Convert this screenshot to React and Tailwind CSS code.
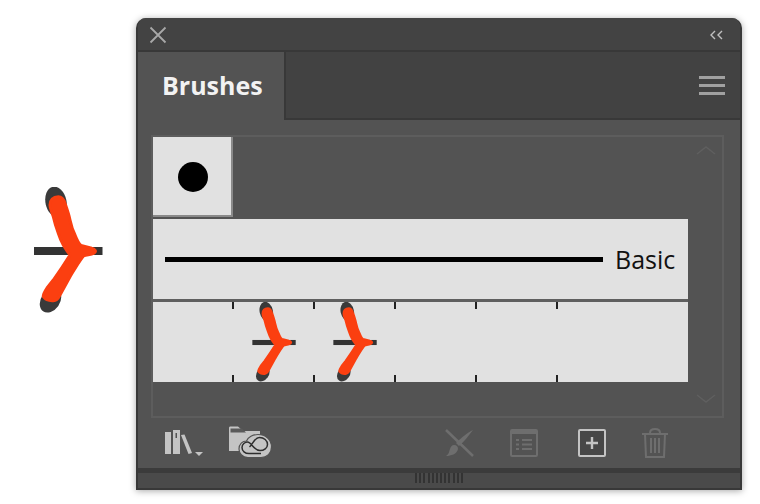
const Brush = ({ className }) => (
  <svg viewBox="0 0 70 128" className={className}>
    <rect x="0" y="60" width="68.5" height="8" fill="#333333" />
    <ellipse cx="22" cy="15" rx="10.500" ry="15.500" transform="rotate(-12 22 15)" fill="#3a3a3a" />
    <ellipse cx="16.500" cy="113.500" rx="9.500" ry="13" transform="rotate(35 16.500 113.500)" fill="#3a3a3a" />
    <path d="M16 18C16 13 19 9.700 24.300 9.700C28 9.700 30 13 31 16.300C33 22 35 28 36 33C37.500 40 39 44 41 48C43 53 45 57 47 58.500L57.700 61.300C61 62 62 64 61 65C60 67 57 67.500 53 68C51 68.200 49.500 69 49.300 69C44 76 40 83 36 89.700L26 108C24 112 22 113.700 19.300 113.700C15 114 11 112 9.300 109.700C9 107 11 104 13 101L19.300 93C25 85 31 76 36 68C33 64 31 61 29.300 58C27 54 25.500 50 24.300 46.300C22 40 20.500 35 19.300 29.700C18 25 16 22 16 18Z" fill="#fb3f10" stroke="#fb3f10" strokeWidth="3" strokeLinejoin="round" />
  </svg>
);

const LibraryIcon = () => (
  <svg width="40" height="26" viewBox="0 0 40 26" className="mr-[24px]">
    <rect x="1" y="2" width="6" height="22" fill="#c4c4c4" />
    <rect x="9" y="0" width="7" height="24" fill="#c4c4c4" />
    <rect x="11.500" y="3" width="1.500" height="5" fill="#535353" />
    <path d="M17 5L20.500 4.500L28 23L24.500 24Z" fill="#c4c4c4" />
    <path d="M31 22h8l-4 4z" fill="#c4c4c4" />
  </svg>
);

const FolderCloudIcon = () => (
  <svg width="45" height="34" viewBox="0 0 45 34">
    <path d="M1 25V2C1 1 1.500 0.500 2.500 0.500H10L15 5H32V25Z" fill="#c4c4c4" />
    <path d="M2.500 6.500H18L14 2.500H2.500Z" fill="#5a5a5a" />
    <path d="M20 31.500C14 31.500 11 27 11 23C11 18 14.500 15 18.500 15C20 11 25 8.500 30 8.500C38 8.500 43.500 14 43.500 21C43.500 27.500 39 31.500 33 31.500Z" fill="#c4c4c4" stroke="#535353" strokeWidth="1.200" />
    <path d="M33 27.500H21C17 27.500 14 25 14 21.500C14 18 17 16 19.500 16C23.500 16 25.500 24.500 32 24.500C36 24.500 39.500 22 39.500 18.500C39.500 14.500 36 11.500 31.500 11.500C26.500 11.500 25 18 21.500 21" fill="none" stroke="#2e2e2e" strokeWidth="1.500" />
  </svg>
);

const NoBrushIcon = () => (
  <svg width="29" height="29" viewBox="0 0 29 29">
    <path d="M1 1L28 27" stroke="#6e6e6e" strokeWidth="2.500" />
    <path d="M28 1C24 6 19 13 14 17L11 14C16 9 23 3 28 1Z" fill="#6e6e6e" />
    <path d="M9 16C12 16 13 18 13 20C12 25 6 27 1 27C4 25 4 23 5 20C5.500 18 7 16 9 16Z" fill="#6e6e6e" />
  </svg>
);

const OptionsIcon = () => (
  <svg width="28" height="28" viewBox="0 0 28 28">
    <rect x="1" y="1" width="26" height="26" rx="1" fill="none" stroke="#6e6e6e" strokeWidth="2" />
    <rect x="1" y="1" width="26" height="4" fill="#6e6e6e" />
    <path d="M6 11h3M12 11h10M6 15.500h3M12 15.500h10M6 20h3M12 20h10" stroke="#6e6e6e" strokeWidth="2" />
  </svg>
);

const NewIcon = () => (
  <svg width="28" height="28" viewBox="0 0 28 28">
    <rect x="1" y="1" width="26" height="26" rx="1" fill="#474747" stroke="#c4c4c4" strokeWidth="2" />
    <path d="M14 8v12M8 14h12" stroke="#c4c4c4" strokeWidth="2.400" />
  </svg>
);

const TrashIcon = () => (
  <svg width="26" height="30" viewBox="0 0 26 30">
    <path d="M0 6h26" stroke="#6e6e6e" strokeWidth="2" />
    <path d="M8 5C8 2 10 1 13 1C16 1 18 2 18 5" fill="none" stroke="#6e6e6e" strokeWidth="2" />
    <path d="M3 6L4 29H22L23 6" fill="none" stroke="#6e6e6e" strokeWidth="2" />
    <path d="M9 10v15M13 10v15M17 10v15" stroke="#6e6e6e" strokeWidth="2" />
  </svg>
);

const Ticks = ({ children }) => (
  <div className="relative flex h-full w-[81px] flex-col items-end justify-between">
    <div className="h-[7px] w-[2px] bg-[#222222]" />
    {children}
    <div className="h-[7px] w-[2px] bg-[#222222]" />
  </div>
);

export default function App() {
  return (
    <div className="flex h-[504px] w-[760px] items-start overflow-hidden bg-white pl-[34px] pt-[18px] font-['Open_Sans',sans-serif]">
      <Brush className="mt-[169px] h-[128px] w-[70px] shrink-0" />
      <div className="ml-[32px] flex h-[472px] w-[606px] shrink-0 flex-col overflow-hidden rounded-t-[10px] border-2 border-t-0 border-[#383838] bg-[#535353] shadow-[0_1px_7px_rgba(0,0,0,0.35)]">
        <div className="flex h-[34px] shrink-0 items-center justify-between border-b-2 border-[#383838] bg-[#434343] pl-[11px] pr-[17px] pt-[2px]">
          <svg width="18" height="18" viewBox="0 0 18 18">
            <path d="M1.500 1.500L16.500 16.500M16.500 1.500L1.500 16.500" stroke="#a8a8a8" strokeWidth="1.800" />
          </svg>
          <svg width="14" height="10" viewBox="0 0 14 10">
            <path d="M6 1L2 5L6 9M13 1L9 5L13 9" fill="none" stroke="#c0c0c0" strokeWidth="1.400" />
          </svg>
        </div>
        <div className="flex h-[68px] shrink-0 bg-[#424242]">
          <div className="flex h-full w-[148px] items-center border-r-2 border-[#383838] bg-[#535353] pb-[2px] pl-[24px] text-[25px] font-bold leading-none text-[#f2f2f2]">
            Brushes
          </div>
          <div className="flex flex-1 items-center justify-end border-b-2 border-[#383838] pr-[15px]">
            <div className="flex w-[26px] flex-col gap-[5px]">
              <div className="h-[3px] bg-[#a0a0a0]" />
              <div className="h-[3px] bg-[#a0a0a0]" />
              <div className="h-[3px] bg-[#a0a0a0]" />
            </div>
          </div>
        </div>
        <div className="flex min-h-0 flex-1 flex-col px-[13px] pt-[15px]">
          <div className="flex h-[283px] w-[573px] shrink-0 border-2 border-[#5d5d5d]">
            <div className="flex w-[535px] shrink-0 flex-col">
              <div className="flex h-[80px] w-[80px] items-center justify-center border-r-2 border-b-2 border-[#8a8a8a] bg-[#e1e1e1] pl-[2px] pt-[2px]">
                <div className="h-[30px] w-[30px] rounded-full bg-black" />
              </div>
              <div className="mt-[2px] flex h-[80px] items-center bg-[#e1e1e1] pl-[12px]">
                <div className="h-[5px] w-[438px] bg-black" />
                <span className="ml-[12px] text-[25px] leading-none text-[#111111]">Basic</span>
              </div>
              <div className="h-[3px] bg-[#5f5f5f]" />
              <div className="flex h-[80px] overflow-hidden bg-[#e1e1e1]">
                <Ticks />
                <Ticks>
                  <Brush className="absolute left-[18px] top-0 h-[81px] w-[45px]" />
                </Ticks>
                <Ticks>
                  <Brush className="absolute left-[18px] top-0 h-[81px] w-[45px]" />
                </Ticks>
                <Ticks />
                <Ticks />
              </div>
            </div>
            <div className="flex flex-1 flex-col items-center justify-between pb-[12px] pl-[2px] pt-[8px]">
              <svg width="20" height="10" viewBox="0 0 20 10">
                <path d="M1 9L10 2L19 9" fill="none" stroke="#5f5f5f" strokeWidth="1.500" />
              </svg>
              <svg width="20" height="10" viewBox="0 0 20 10">
                <path d="M1 1L10 8L19 1" fill="none" stroke="#5f5f5f" strokeWidth="1.500" />
              </svg>
            </div>
          </div>
          <div className="flex flex-1 items-center pl-[13px]">
            <LibraryIcon />
            <FolderCloudIcon />
            <div className="ml-[172px]"><NoBrushIcon /></div>
            <div className="ml-[36px]"><OptionsIcon /></div>
            <div className="ml-[40px]"><NewIcon /></div>
            <div className="ml-[36px]"><TrashIcon /></div>
          </div>
        </div>
        <div className="h-[5px] shrink-0 bg-[#3b3b3b]" />
        <div className="flex h-[15px] shrink-0 justify-center bg-[#4a4a4a]">
          <div className="flex h-[10px] w-[48px] justify-between">
            {Array.from({ length: 12 }).map((_, i) => (
              <div key={i} className="h-full w-[2px] bg-[#333333]" />
            ))}
          </div>
        </div>
      </div>
    </div>
  );
}
